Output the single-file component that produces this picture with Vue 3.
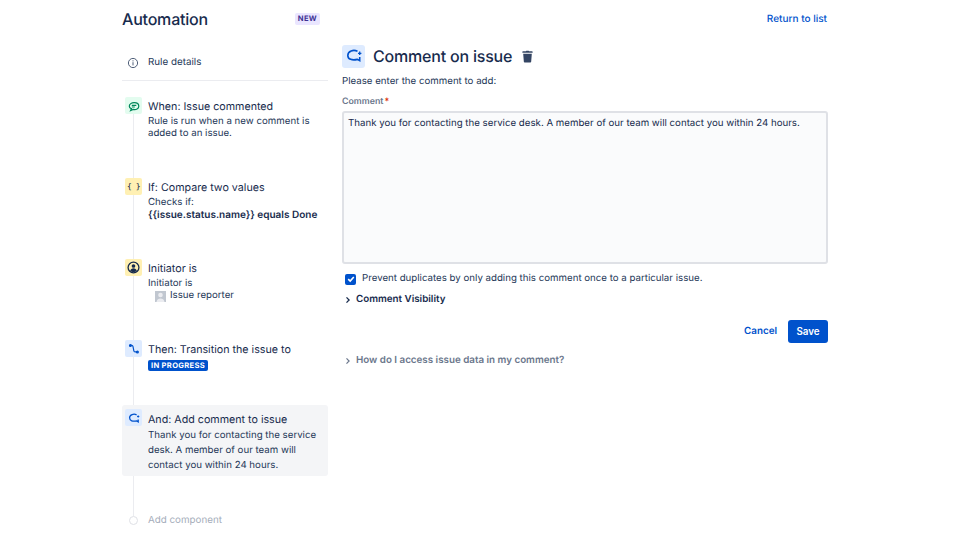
<template>
  <div class="page">
    <header class="top">
      <div class="title-side">
        <h1>Automation</h1>
        <span class="new-tag">NEW</span>
      </div>
      <a class="return-link">Return to list</a>
    </header>

    <div class="columns">
      <aside class="rule-col">
        <div class="rule-details">
          <svg class="info-icon" viewBox="0 0 12 12" width="12" height="12">
            <circle cx="6" cy="6" r="4.6" fill="none" stroke="#505f79" stroke-width="1" />
            <rect x="5.5" y="5.2" width="1" height="3.2" fill="#505f79" />
            <rect x="5.5" y="3.3" width="1" height="1.1" fill="#505f79" />
          </svg>
          <span>Rule details</span>
        </div>

        <div class="steps">
          <div class="rail"></div>

          <div class="step">
            <div class="tile green">
              <svg viewBox="0 0 12 12" width="12" height="12" fill="none" stroke="#00875a" stroke-width="1.2">
                <path d="M3.400 8.700 2.600 10.500l2.600-1.100c2.900.6 5.600-.8 5.600-3.200 0-2.200-2-3.500-4.600-3.500-2.700 0-4.900 1.300-4.900 3.500 0 1 .7 1.900 1.900 2.500z" />
                <path d="M3.800 5.400h4.500M3.800 7h3" />
              </svg>
            </div>
            <div class="step-body">
              <div class="step-title">When: Issue commented</div>
              <div class="step-text">Rule is run when a new comment is added to an issue.</div>
            </div>
          </div>

          <div class="step">
            <div class="tile yellow">
              <span class="braces">{ }</span>
            </div>
            <div class="step-body">
              <div class="step-title">If: Compare two values</div>
              <div class="step-text">Checks if:<br /><b>&#123;&#123;issue.status.name&#125;&#125; equals Done</b></div>
            </div>
          </div>

          <div class="step">
            <div class="tile yellow">
              <svg viewBox="0 0 12 12" width="13" height="13">
                <circle cx="6" cy="6" r="5" fill="none" stroke="#172b4d" stroke-width="1.2" />
                <circle cx="6" cy="4.600" r="1.700" fill="#172b4d" />
                <path d="M2.900 9.300c.4-1.700 1.700-2.500 3.100-2.500s2.700.8 3.100 2.500c-1.800 1.300-4.400 1.300-6.200 0z" fill="#172b4d" />
              </svg>
            </div>
            <div class="step-body">
              <div class="step-title">Initiator is</div>
              <div class="step-text">
                Initiator is
                <div class="reporter">
                  <svg class="avatar" viewBox="0 0 11 11" width="11" height="11">
                    <rect width="11" height="11" fill="#c1c7d0" />
                    <circle cx="5.500" cy="4" r="2.300" fill="#ebecf0" />
                    <path d="M1.500 11c.3-2.500 2-3.500 4-3.500s3.700 1 4 3.500z" fill="#ebecf0" />
                  </svg>
                  Issue reporter
                </div>
              </div>
            </div>
          </div>

          <div class="step short">
            <div class="tile blue">
              <svg viewBox="0 0 12 12" width="12" height="12" fill="none" stroke="#0052cc" stroke-width="1.200">
                <path d="M2.800 2.400h.9c.8 0 1.200.4 1.300 1.100l.8 4.200c.1.800.6 1.200 1.300 1.200H9" />
                <circle cx="2.400" cy="2.400" r=".9" fill="#0052cc" />
                <circle cx="9.400" cy="8.900" r=".9" fill="#0052cc" />
              </svg>
            </div>
            <div class="step-body">
              <div class="step-title">Then: Transition the issue to</div>
              <span class="status-tag">IN PROGRESS</span>
            </div>
          </div>

          <div class="step active">
            <div class="tile blue">
              <svg viewBox="0 0 12 12" width="12" height="12" fill="none" stroke="#0052cc" stroke-width="1.300">
                <path d="M8.600 2.800C6 1.600 1.600 2.300 1.600 5.800c0 3 3.200 3.900 7 3.100l1.600.9V7.400" />
                <path d="M10.200 3.400v2.200M9.100 4.500h2.200" stroke-width="1" />
              </svg>
            </div>
            <div class="step-body">
              <div class="step-title">And: Add comment to issue</div>
              <div class="step-text roomy">Thank you for contacting the service desk. A member of our team will contact you within 24 hours.</div>
            </div>
          </div>

          <div class="add-row">
            <span class="add-dot"></span>
            <span>Add component</span>
          </div>
        </div>
      </aside>

      <main class="form-col">
        <div class="form-head">
          <div class="head-tile">
            <svg viewBox="0 0 16 16" width="16" height="16" fill="none" stroke="#0052cc" stroke-width="1.600">
              <path d="M11.500 3.200C7.500 1.400 1.800 2.800 1.800 7.400c0 3.900 4.300 5.300 9.600 4l2.300 1.300V9" />
              <path d="M13.700 3.600v3.400M12 5.300h3.400" stroke-width="1.300" />
            </svg>
          </div>
          <h2>Comment on issue</h2>
          <svg class="trash" viewBox="0 0 12 14" width="11" height="13">
            <path d="M4.300 1.400 4.700.6h2.600l.4.800H11c.4 0 .6.300.6.600v.9H.4V2c0-.3.200-.6.600-.6z" fill="#344563" />
            <path d="M1.300 4.100h9.400l-.7 8.600c0 .5-.4.800-.9.800H2.900c-.5 0-.9-.3-.9-.8z" fill="#344563" />
          </svg>
        </div>

        <p class="prompt">Please enter the comment to add:</p>
        <label class="field-label">Comment<span class="req">*</span></label>
        <div class="comment-box">Thank you for contacting the service desk. A member of our team will contact you within 24 hours.</div>

        <div class="check-row">
          <span class="checkbox">
            <svg viewBox="0 0 10 10" width="10" height="10" fill="none" stroke="#fff" stroke-width="1.600">
              <path d="M2.200 5.100 4.200 7l3.600-4" />
            </svg>
          </span>
          <span>Prevent duplicates by only adding this comment once to a particular issue.</span>
        </div>

        <div class="expander strong">
          <svg viewBox="0 0 8 8" width="8" height="8" fill="none" stroke="#172b4d" stroke-width="1.300">
            <path d="M2.500 1.400 5.100 4 2.500 6.600" />
          </svg>
          <span>Comment Visibility</span>
        </div>

        <div class="actions">
          <a class="cancel">Cancel</a>
          <button class="save">Save</button>
        </div>

        <div class="expander muted">
          <svg viewBox="0 0 8 8" width="8" height="8" fill="none" stroke="#6b778c" stroke-width="1.200">
            <path d="M2.500 1.400 5.100 4 2.500 6.600" />
          </svg>
          <span>How do I access issue data in my comment?</span>
        </div>
      </main>
    </div>
  </div>
</template>

<script setup>
</script>

<style>
html,
body {
  margin: 0;
  background: #fff;
}
</style>

<style scoped>
.page {
  width: 706px;
  height: 540px;
  margin-left: 122px;
  overflow: hidden;
  font-family: Inter, "Liberation Sans", sans-serif;
  font-size: 9.8px;
  color: #253858;
  text-rendering: geometricPrecision;
}

.top {
  display: flex;
  align-items: center;
  justify-content: space-between;
  height: 38px;
}

.title-side {
  display: flex;
  align-items: center;
  justify-content: space-between;
  width: 198px;
}

h1 {
  margin: 0;
  font-size: 16px;
  font-weight: 500;
  letter-spacing: -0.2px;
  color: #172b4d;
}

.new-tag {
  padding: 1px 3px;
  border-radius: 2px;
  background: #eae6ff;
  color: #403294;
  font-size: 7.6px;
  font-weight: 700;
  line-height: 10px;
  letter-spacing: 0.3px;
}

.return-link {
  margin-right: 1px;
  color: #0052cc;
  font-size: 10px;
  font-weight: 500;
}

.columns {
  display: flex;
  gap: 14px;
}

.rule-col {
  flex: 0 0 206px;
}

.rule-details {
  display: flex;
  align-items: center;
  gap: 9px;
  padding: 7px 0 0 5px;
  height: 35px;
  border-bottom: 1px solid #ebecf0;
}

.steps {
  position: relative;
  padding-top: 16px;
}

.rail {
  position: absolute;
  left: 11px;
  top: 30px;
  height: 405px;
  width: 1px;
  background: #ebecf0;
}

.step {
  position: relative;
  display: flex;
  gap: 6px;
  height: 81px;
  padding-left: 3px;
  box-sizing: border-box;
}

.step.short {
  height: 65px;
}

.tile {
  flex: 0 0 17px;
  display: flex;
  align-items: center;
  justify-content: center;
  width: 17px;
  height: 17px;
  border-radius: 2px;
}

.green {
  background: #e3fcef;
}

.yellow {
  background: #fff0b3;
}

.blue {
  background: #deebff;
}

.braces {
  font-size: 8px;
  color: #172b4d;
  letter-spacing: -0.5px;
  font-family: "DejaVu Sans Mono", monospace;
}

.step-body {
  flex: 1;
  min-width: 0;
  padding-top: 2px;
}

.step-title {
  font-size: 10.7px;
  line-height: 16px;
  color: #172b4d;
}

.step-text {
  font-size: 9.7px;
  line-height: 12px;
  margin-top: 1px;
}

.step-text b {
  font-size: 10px;
  font-weight: 600;
  color: #172b4d;
}

.step-text.roomy {
  margin-top: 0;
  line-height: 15px;
}

.reporter {
  display: flex;
  align-items: center;
  gap: 4px;
  padding-left: 7px;
}

.avatar {
  flex: none;
}

.status-tag {
  display: inline-block;
  margin-top: 2px;
  padding: 0 3px;
  border-radius: 2px;
  background: #0052cc;
  color: #fff;
  font-size: 7.6px;
  font-weight: 700;
  line-height: 11px;
  letter-spacing: 0.3px;
}

.step.active {
  height: 71px;
  padding-top: 4px;
  border-radius: 3px;
  background: #f4f5f7;
}

.step.active .step-body {
  padding-top: 3px;
}

.add-row {
  position: relative;
  display: flex;
  align-items: center;
  gap: 10px;
  margin-top: 39px;
  padding-left: 7px;
  color: #a5adba;
}

.add-dot {
  width: 7px;
  height: 7px;
  border: 1px solid #dfe1e6;
  border-radius: 50%;
  background: #fff;
}

.form-col {
  flex: 1;
  margin-top: 6px;
}

.form-head {
  display: flex;
  align-items: center;
  height: 24px;
}

.head-tile {
  display: flex;
  align-items: center;
  justify-content: center;
  width: 23px;
  height: 23px;
  border-radius: 3px;
  background: #deebff;
}

h2 {
  margin: 0 0 0 8px;
  font-size: 16px;
  font-weight: 500;
  letter-spacing: -0.2px;
  color: #172b4d;
}

.trash {
  margin-left: 10px;
}

.prompt {
  margin: 7px 0 0;
  font-size: 9.7px;
  line-height: 14px;
}

.field-label {
  display: block;
  margin-top: 7px;
  font-size: 8.8px;
  font-weight: 600;
  line-height: 12px;
  color: #6b778c;
}

.req {
  margin-left: 1px;
  color: #de350b;
}

.comment-box {
  box-sizing: border-box;
  height: 153px;
  margin-top: 3px;
  padding: 4px;
  border: 2px solid #dfe1e6;
  border-radius: 3px;
  background: #fafbfc;
  font-size: 9.7px;
  line-height: 14px;
  color: #172b4d;
}

.check-row {
  display: flex;
  align-items: center;
  gap: 6px;
  margin-top: 8px;
  padding-left: 3px;
  font-size: 9.7px;
  line-height: 14px;
}

.checkbox {
  display: flex;
  align-items: center;
  justify-content: center;
  width: 11px;
  height: 11px;
  border-radius: 2px;
  background: #0052cc;
}

.expander {
  display: flex;
  align-items: center;
  gap: 4px;
  line-height: 14px;
  font-weight: 600;
  padding-left: 2px;
}

.expander.strong {
  margin-top: 7px;
  color: #172b4d;
}

.expander.muted {
  margin-top: 11px;
  color: #6b778c;
}

.actions {
  display: flex;
  align-items: center;
  justify-content: flex-end;
  gap: 11px;
  margin-top: 13px;
}

.cancel {
  color: #0052cc;
  font-weight: 600;
}

.save {
  height: 23px;
  width: 40px;
  padding: 0;
  border: 0;
  border-radius: 3px;
  background: #0052cc;
  color: #fff;
  font: inherit;
  font-weight: 600;
}
</style>
